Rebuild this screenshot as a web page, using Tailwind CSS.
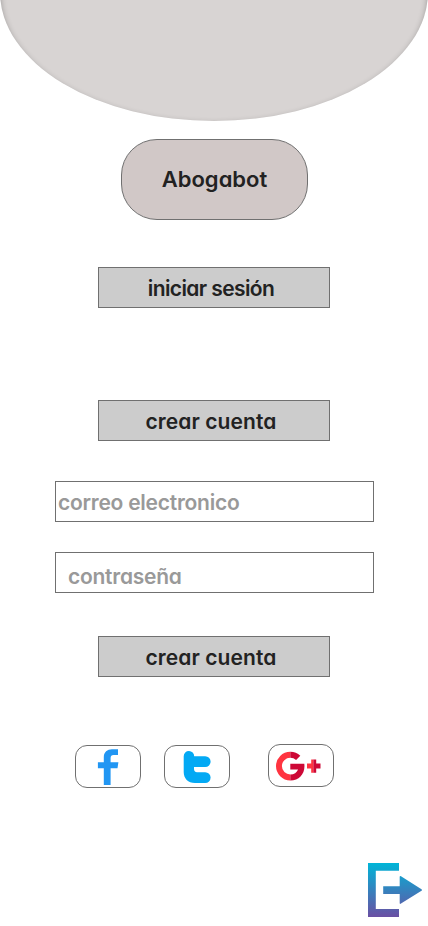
<!DOCTYPE html>
<html lang="es">
<head>
<meta charset="utf-8">
<meta name="viewport" content="width=device-width, initial-scale=1">
<title>Abogabot</title>
<script src="https://cdn.jsdelivr.net/npm/@tailwindcss/browser@4"></script>
</head>
<body class="bg-white">
<main class="flex h-[926px] w-[428px] flex-col overflow-hidden bg-white font-['Inter','Lato',sans-serif] text-[21px] leading-7 font-semibold text-[#222] [font-feature-settings:'cv11','ss03']">
  <header class="-mt-[137px] h-[258px] w-[428px] shrink-0 rounded-[50%] bg-[#d8d4d3] shadow-[inset_0_3px_6px_rgba(0,0,0,0.32)]"></header>

  <h1 class="mt-[18px] ml-[121px] flex h-[81px] w-[187px] shrink-0 items-center justify-center rounded-[36px] border border-[#707070] bg-[#d1c8c7] pb-0.5 text-[22px]"><span>Abogabot</span></h1>

  <button class="mt-[47px] ml-[98px] flex h-[41px] w-[232px] shrink-0 items-center justify-center border border-[#707070] bg-[#ccc] pt-0.5 pr-1.5"><span class="tracking-[-0.6px]">iniciar sesión</span></button>
  <button class="mt-[92px] ml-[98px] flex h-[41px] w-[232px] shrink-0 items-center justify-center border border-[#707070] bg-[#ccc] pt-0.5 pr-1.5"><span class="tracking-[0.1px]">crear cuenta</span></button>

  <label class="mt-[40px] ml-[55px] flex h-[41px] w-[319px] shrink-0 items-center border border-[#707070] pt-0.5 pl-0.5 text-[#999]"><span class="tracking-[-0.25px]">correo electronico</span></label>
  <label class="mt-[30px] ml-[55px] flex h-[41px] w-[319px] shrink-0 items-center border border-[#707070] pt-[9px] pl-[12px] text-[#999]"><span class="tracking-[-0.25px]">contraseña</span></label>

  <button class="mt-[43px] ml-[98px] flex h-[41px] w-[232px] shrink-0 items-center justify-center border border-[#707070] bg-[#ccc] pt-0.5 pr-1.5"><span class="tracking-[0.1px]">crear cuenta</span></button>

  <nav class="mt-[67px] ml-[75px] flex shrink-0 items-start">
    <a aria-label="Facebook" class="mt-px h-[43px] w-[66px] rounded-[12px] border border-[#707070]">
      <svg class="h-[41px] w-[64px]" viewBox="76 746 64 41"><path fill="#2196f3" d="M118 749.200V755h-4.500q-2.900 0-2.900 3v4.200h7.800l-.9 6h-6.900v16.800h-6.800v-16.800h-5.900v-6h5.900V757c0-5 3.500-7.800 8.200-7.800z"/></svg>
    </a>
    <a aria-label="Twitter" class="mt-px ml-[23px] h-[43px] w-[66px] rounded-[12px] border border-[#707070]">
      <svg class="h-[41px] w-[64px]" viewBox="165 746 64 41"><path fill="#03a9f4" d="M189 751a5.200 5.200 0 0 1 5.200 5.200h11a5 5 0 0 1 0 10.800H194v2c0 2 1 3.200 3 3.200h8.200a5.400 5.400 0 0 1 0 10.800H195c-7 0-11.300-4.500-11.300-11v-15.800A5.200 5.200 0 0 1 189 751z"/></svg>
    </a>
    <a aria-label="Google Plus" class="ml-[38px] h-[43px] w-[66px] rounded-[12px] border border-[#707070]">
      <svg class="h-[41px] w-[64px]" viewBox="269 745 64 41">
        <path fill="#ff3440" d="M290.300 751.800a14.300 14.300 0 0 0 0 28.600v-5.900a8.400 8.400 0 0 1 0-16.800zM307 763.500h6.500v5H307zM311.200 759.500h2.300v13.300h-2.300z"/>
        <path fill="#cd0836" d="M290.300 751.800c3.900 0 7.400 1.500 10 4l-4.200 4.100a8.600 8.600 0 0 0-5.800-2.200zM290.300 763.800h14c1.200 9.200-4.700 16.600-14 16.600v-5.900c3.900 0 6.500-1.900 7.800-5h-7.800zM313.400 759.500h2.800v4h4.300v5h-4.300v4.300h-2.800z"/>
      </svg>
    </a>
  </nav>

  <a aria-label="Salir" class="mt-[75px] ml-[368px] h-[55px] w-[54px] shrink-0">
    <svg class="h-[55px] w-[54px]" viewBox="0 0 54 55">
      <defs><linearGradient id="exit" gradientUnits="userSpaceOnUse" x1="0" y1="0" x2="0" y2="54"><stop stop-color="#00b5d8"/><stop offset="1" stop-color="#6a4fa3"/></linearGradient></defs>
      <path fill="url(#exit)" d="M0 0h31v7.800H7.800v38.200H31V54H0zM15.200 23.200h16.500V14q0-1.500 1.300-.7L53.500 26.200q1 .8 0 1.600L33 40.600q-1.300.8-1.300-.7v-8.800H15.200z"/>
    </svg>
  </a>
</main>
</body>
</html>
